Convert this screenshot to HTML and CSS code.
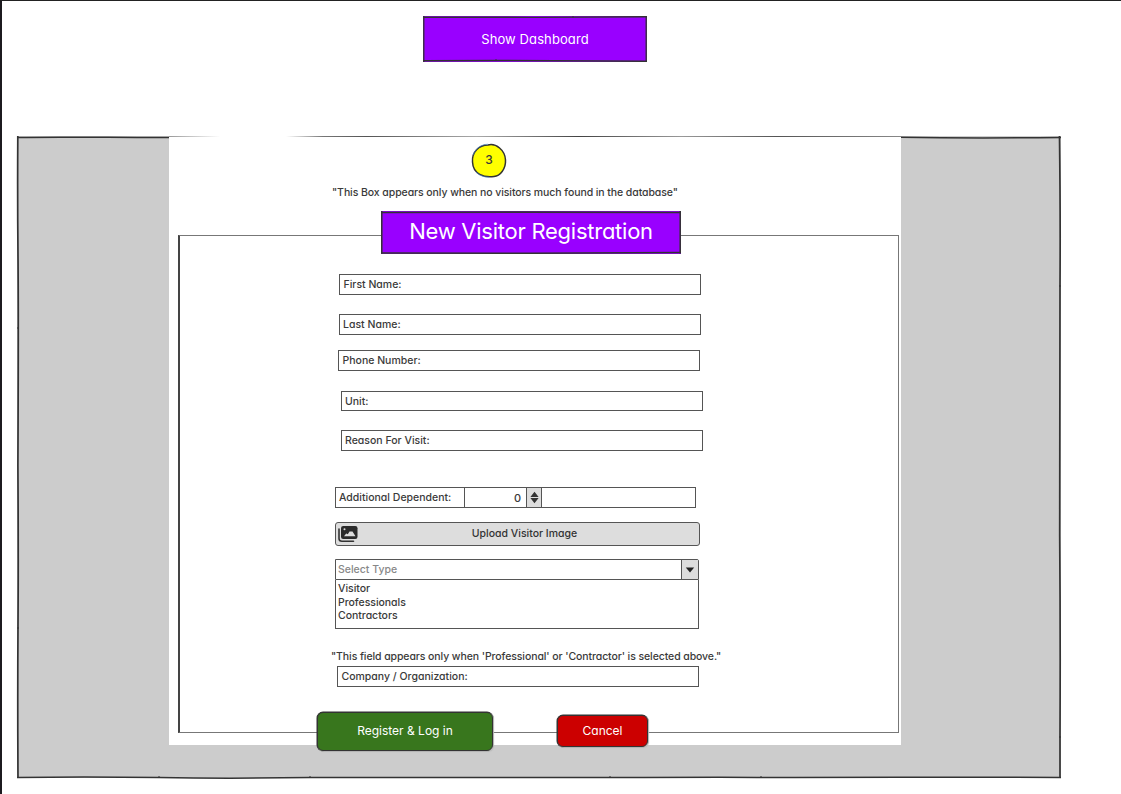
FILE: index.html
```html
<!DOCTYPE html>
<html lang="en">
<head>
<meta charset="utf-8">
<title>New Visitor Registration</title>
<link rel="stylesheet" href="styles.css">
</head>
<body>
<main class="page">
  <button class="dashboard">
    <svg class="outline" viewBox="0 0 224 47" preserveAspectRatio="none"><path d="M0 1.200L112 1.400L224 .7M0 45.800L75 45.500L224 46.200" stroke-width="1.500"/><path d="M.8 0V47M223.200 0V47" stroke-width="1.300"/><path d="M150 0v2M73 44v2"/></svg>
    <span class="t-dashboard">Show Dashboard</span>
  </button>
  <section class="panel">
    <svg class="outline" viewBox="0 0 1044 642" preserveAspectRatio="none">
      <path d="M0 1.500C50 .5 100 1.800 152 1.600M884 1.300Q960 2.400 1044 1.400M0 641.500Q70 640.500 142 641.600T293 641.500Q450 642 593 641.500T744 641.500Q870 640.800 1044 641.500" stroke-width="1.500"/>
      <path d="M.8 0Q.4 60 1 120T.9 330Q1.500 420 1 490T1 642M1042.500 0Q1043.500 80 1043 150T1042.700 400Q1043.500 500 1043 600V642" stroke-width="1.700"/>
      <path d="M0 192h2M0 492h2M1042 150h2M1042 601h2M142 640v2M293 640v2M593 640v2M744 640v2"/>
    </svg>
    <div class="edge"></div>
    <div class="sheet">
      <div class="badge">
        <svg class="outline" viewBox="0 0 36 36"><path d="M17 2C25 0 34 7 34.500 17C35 26 29 33 23 33.500C13 35 2 31 1.500 19C.7 9 8 2 17 2Z" fill="#ff0" stroke="#333" stroke-width="1.500"/><path d="M2 12C5 5 10 1.500 17 1.200M5 29C9 33 13 34 18 34.300" stroke="#4a90d9" stroke-width=".6"/></svg>
        <span class="badge-num">3</span>
      </div>
      <p class="note note-top">"This Box appears only when no visitors much found in the database"</p>
      <form class="frame">
        <h1 class="title">
          <svg class="outline" viewBox="0 0 300 44" preserveAspectRatio="none"><path d="M0 1.500Q150 .8 300 1.600M0 43L150 43.200L300 42.500" stroke-width="1.600"/><path d="M.8 0V43.500M299.200 0V43.500" stroke-width="1.500"/></svg>
          <span class="t-title">New Visitor Registration</span>
        </h1>
        <label class="field f-first"><span class="t-first">First Name:</span></label>
        <label class="field f-last"><span class="t-last">Last Name:</span></label>
        <label class="field f-phone"><span class="t-phone">Phone Number:</span></label>
        <label class="field f-unit"><span class="t-unit">Unit:</span></label>
        <label class="field f-reason"><span class="t-reason">Reason For Visit:</span></label>
        <div class="field f-dependent">
          <span class="dep-label">Additional Dependent:</span>
          <span class="dep-value">0</span>
          <span class="stepper"><svg width="9" height="13" viewBox="0 0 9 13"><path d="M4.500 .8L8.600 5.900H.4zM4.500 12.200L8.600 7.100H.4z" fill="#333"/></svg></span>
        </div>
        <button class="upload" type="button">
          <svg class="upload-icon" width="20" height="18" viewBox="0 0 20 18"><path d="M1 4v9.500Q1 16.200 4 16.200H15.500" fill="none" stroke="#333" stroke-width="1.600" stroke-linecap="round"/><rect x="3" y="1" width="16.500" height="13" rx="2.200" fill="#2b2b2b"/><circle cx="6.500" cy="4.300" r="1" fill="#ddd"/><path d="M6 11.300L8.200 8.500L9.800 9.300L11.500 6.500h3L17.500 11.300z" fill="#ddd"/></svg>
          <span class="t-upload">Upload Visitor Image</span>
        </button>
        <div class="select"><span class="t-select">Select Type</span><span class="caret"><svg width="10" height="6" viewBox="0 0 10 6"><path d="M.8 .5h8.400L5 5.500z" fill="#222"/></svg></span></div>
        <ul class="options"><li class="t-visitor">Visitor</li><li class="t-prof">Professionals</li><li class="t-contr">Contractors</li></ul>
        <p class="note note-field">"This field appears only when 'Professional' or 'Contractor' is selected above."</p>
        <label class="field f-company"><span class="t-company">Company / Organization:</span></label>
        <div class="actions">
          <button class="btn register" type="button"><span class="t-register">Register &amp; Log in</span></button>
          <button class="btn cancel" type="button"><span class="t-cancel">Cancel</span></button>
        </div>
      </form>
    </div>
  </section>
</main>
</body>
</html>
```
FILE: styles.css
```css
* { box-sizing: border-box; }
body { margin: 0; background: #fff; color: #3a3a3a; font: 500 11px/14px Inter, "Open Sans", sans-serif; font-feature-settings: "cv11" 1, "calt" 0; }
button { font: inherit; padding: 0; border: 0; }
h1, p, ul { margin: 0; padding: 0; }
.page { height: 794px; overflow: hidden; border-top: 1px solid #222; border-left: 2px solid #1c1a1f; padding: 15px 0 0 15px; }
.outline { position: absolute; inset: 0; width: 100%; height: 100%; fill: none; stroke: #333; overflow: visible; }
.dashboard { position: relative; display: flex; align-items: center; justify-content: center; width: 224px; height: 46px; margin-left: 406px; background: #90f; color: #fff; font-size: 13px; font-weight: 400; }
.t-dashboard { letter-spacing: .1px; }
.panel { position: relative; width: 1044px; height: 642px; margin-top: 74px; padding: 0 0 0 152px; background: #ccc; }
.edge { height: 1px; width: 732px; background: linear-gradient(90deg, #999, #fff 7%, #fff 16%, #777 21%, #555 27%, #aaa 42%, #444 56%, #999 70%, #555 83%, #888); }
.sheet { width: 732px; height: 608px; padding-top: 6px; background: #fff; display: flex; flex-direction: column; align-items: flex-start; }
.badge { position: relative; width: 36px; height: 36px; margin-left: 302px; display: flex; justify-content: center; padding-top: 10px; font-size: 12px; flex: none; }
.badge-num { position: relative; }
.note { white-space: nowrap; height: 14px; font-size: 10.500px; }
.note-top { margin: 7px 0 0 163px; letter-spacing: -.08px; }
.frame { width: 721px; height: 498px; flex: none; margin: 35px 0 0 9px; border: 1px solid #777; border-left: 2px solid #444; display: flex; flex-direction: column; align-items: flex-start; }
.title { position: relative; flex: none; width: 300px; height: 43px; margin: -25px 0 0 201px; background: #90f; color: #fff; font-size: 22px; font-weight: 400; letter-spacing: -.25px; line-height: 40px; text-align: center; white-space: nowrap; }
.field { flex: none; display: flex; align-items: center; width: 362px; height: 21px; padding-left: 4px; border: 1px solid #555; background: #fff; white-space: nowrap; font-size: 10.500px; }
.f-first { margin: 20px 0 0 159px; padding-left: 3.500px; }
.f-last { margin: 19px 0 0 159px; padding-left: 3px; }
.f-phone { margin: 15px 0 0 158px; padding-left: 3.500px; }
.f-unit { height: 20px; margin: 20px 0 0 161px; padding: 1px 0 0 3px; }
.f-reason { margin: 19px 0 0 161px; padding-left: 3px; }
.f-dependent { margin: 36px 0 0 155px; padding: 0 0 0 3px; align-items: stretch; width: 361px; line-height: 20px; }
.dep-label { width: 126px; border-right: 1px solid #555; }
.dep-value { width: 61px; padding-right: 5px; text-align: right; font-size: 11px; }
.stepper { display: flex; align-items: center; justify-content: center; width: 16px; background: #ddd; border: solid #555; border-width: 0 1px; }
.upload { position: relative; flex: none; width: 365px; height: 24px; margin: 14px 0 0 155px; padding-left: 14px; border: 1px solid #555; border-radius: 3px; background: #ddd; color: #333; font-size: 10.500px; }
.upload-icon { position: absolute; left: 2px; top: 2px; }
.select { flex: none; display: flex; justify-content: space-between; align-items: stretch; width: 364px; height: 21px; margin: 13px 0 0 155px; padding-left: 2px; border: 1px solid #555; border-radius: 0 2px 0 0; color: #888; line-height: 19px; font-size: 10.500px; font-weight: 450; }
.caret { display: flex; align-items: center; justify-content: center; width: 17px; background: #ddd; border-left: 1px solid #555; }
.options { flex: none; list-style: none; width: 364px; height: 49px; margin-left: 155px; padding: 2px 0 0 2px; border: solid #555; border-width: 0 1px 1px; line-height: 13.500px; font-size: 10.500px; letter-spacing: -.03px; }
.note-field { margin: 21px 0 0 151px; letter-spacing: -.09px; }
.f-company { margin: 2px 0 0 157px; padding-left: 3.500px; }
.actions { flex: none; display: flex; align-items: flex-start; gap: 64px; margin: 25px 0 0 137px; }
.btn { color: #fff; border: 1.500px solid #333; font-size: 12px; font-weight: 400; white-space: nowrap; box-shadow: 1px 1px 1px #bbb, 0 0 0 .5px #333; }
.register { width: 176px; height: 39px; padding-bottom: 1px; background: #38761d; border-radius: 6px; }
.cancel { width: 91px; height: 32px; margin-top: 3px; background: #c00; border-radius: 6px; }
```
